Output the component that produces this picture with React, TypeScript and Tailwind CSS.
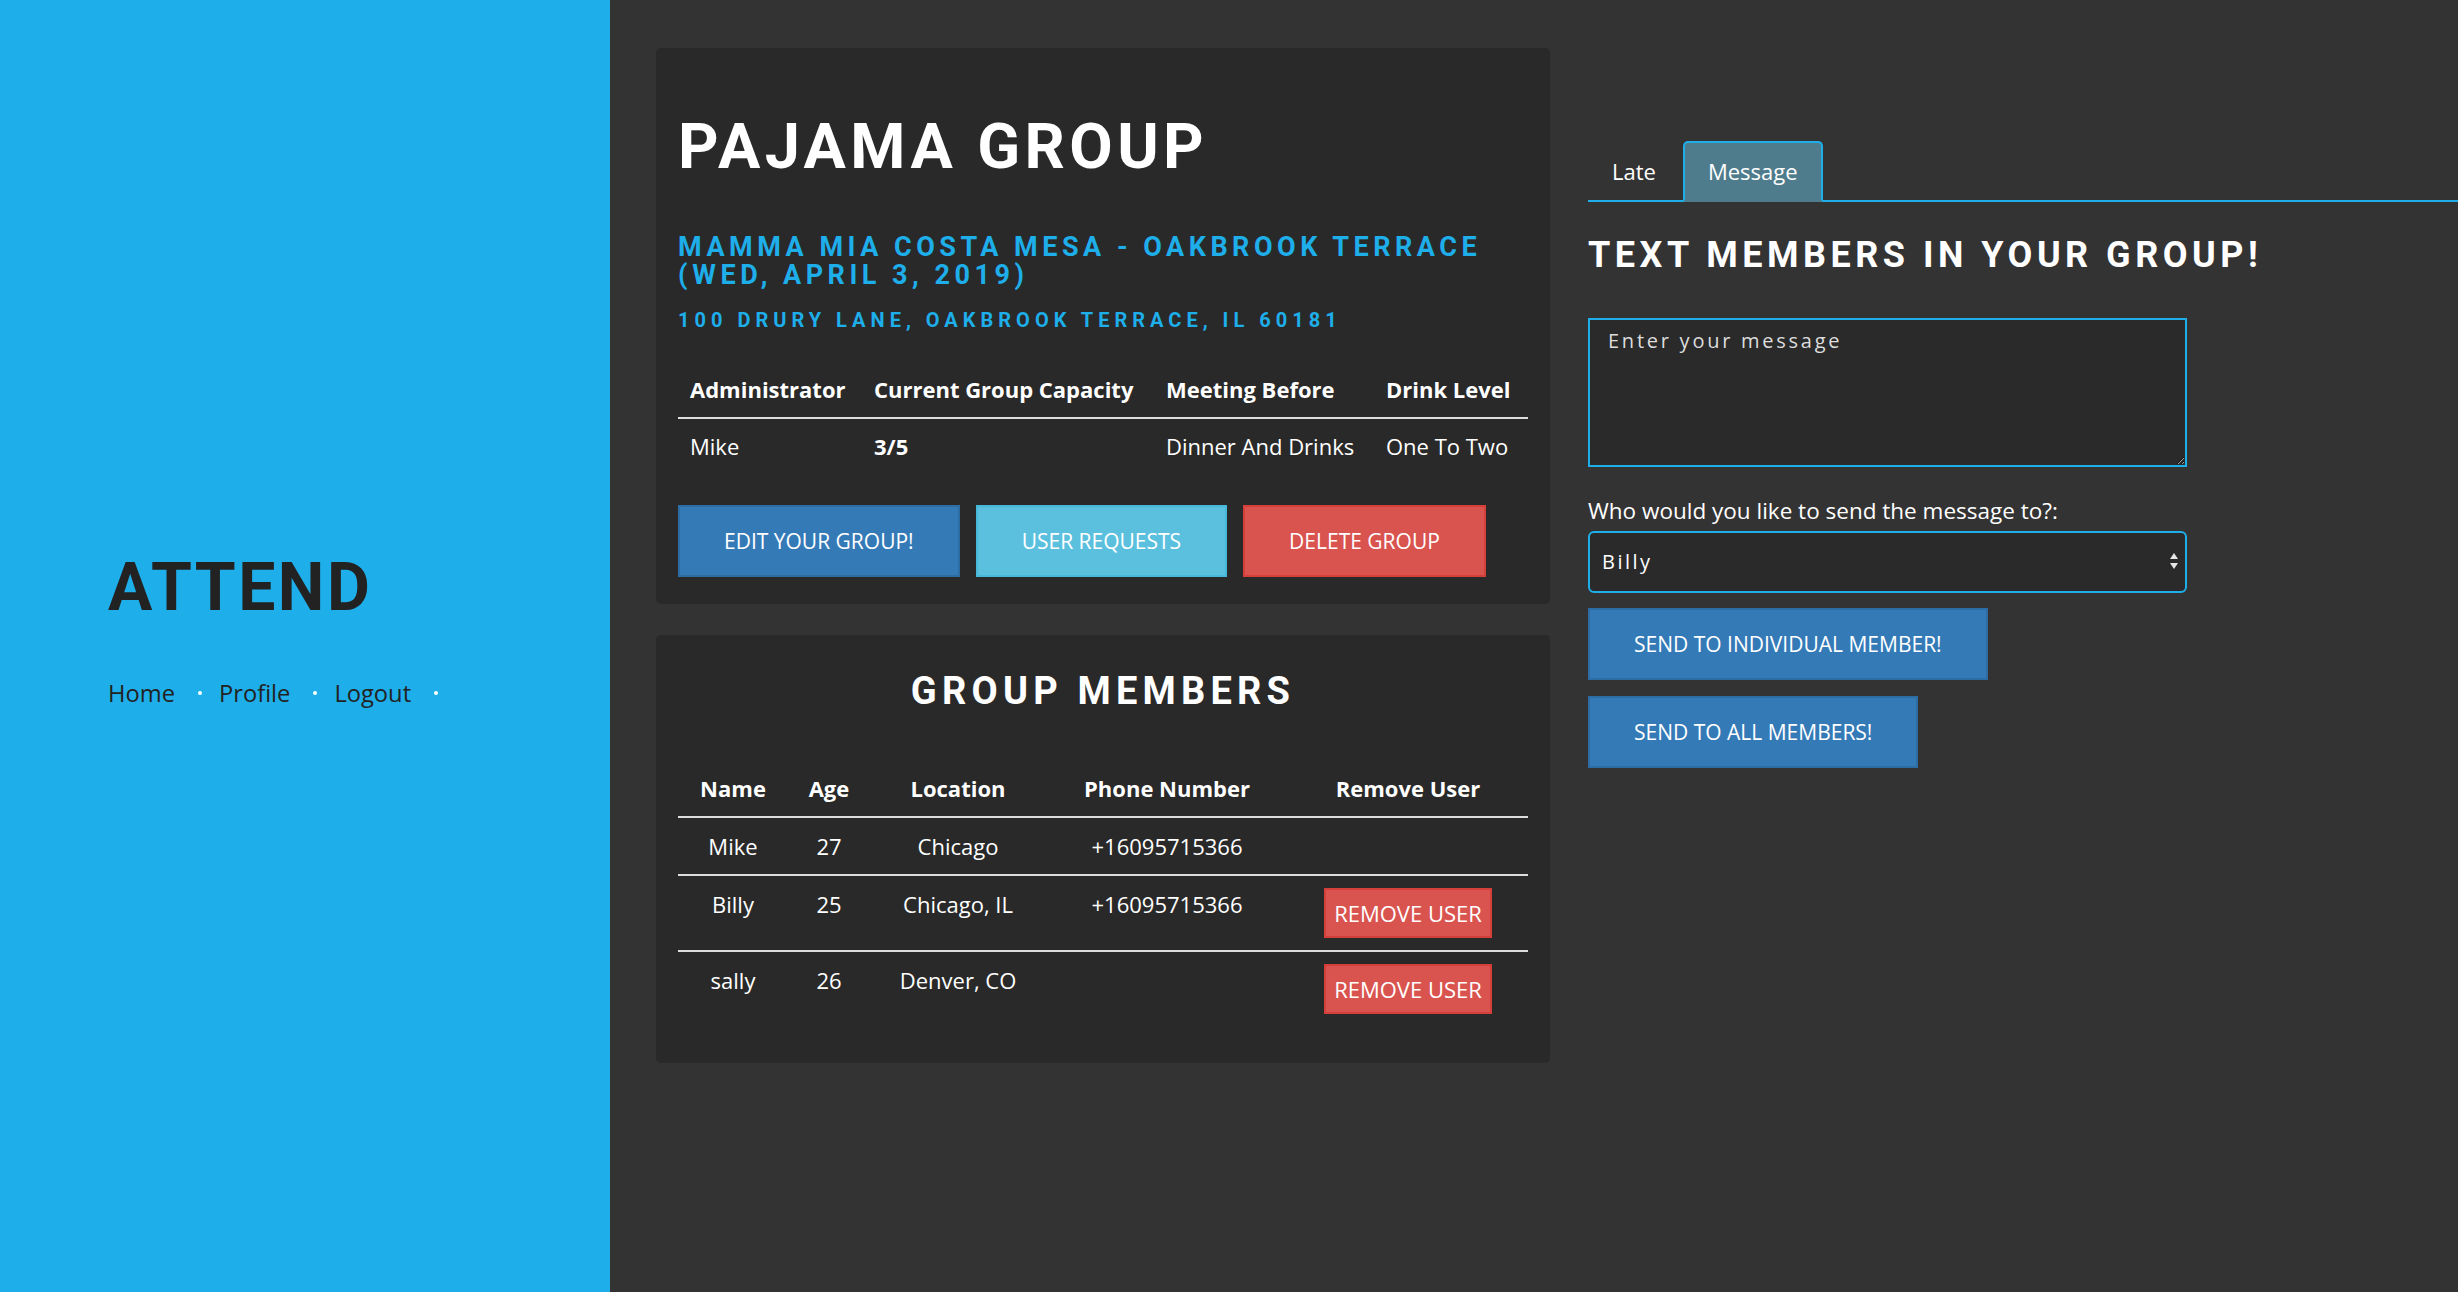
import type { ReactNode } from 'react'

const heading = "font-['Roboto',sans-serif] font-bold uppercase"

interface Member {
  name: string
  age: number
  location: string
  phone: string
  removable: boolean
}

const members: Member[] = [
  { name: 'Mike', age: 27, location: 'Chicago', phone: '+16095715366', removable: false },
  { name: 'Billy', age: 25, location: 'Chicago, IL', phone: '+16095715366', removable: true },
  { name: 'sally', age: 26, location: 'Denver, CO', phone: '', removable: true },
]

function Sidebar() {
  const links = ['Home', 'Profile', 'Logout']
  return (
    <aside className="w-[610px] shrink-0 bg-[#1eaeea] pt-[548px] pl-[108px]">
      <h1 className={`${heading} text-[66px] leading-[79px] tracking-[2.5px] text-[#222]`}>Attend</h1>
      <nav className="mt-[50px] flex items-center text-[23.7px] leading-[32px] text-[#222]">
        {links.map((l) => (
          <div key={l} className="flex items-center">
            <a href="#" className="text-[#222]">{l}</a>
            <span className="ml-[23px] mr-[17px] h-[4px] w-[4px] rounded-full bg-white" />
          </div>
        ))}
      </nav>
    </aside>
  )
}

function Btn({ color, children }: { color: string; children: ReactNode }) {
  return (
    <button className={`border-2 px-[44px] py-[18px] text-[21px] leading-[32px] text-white uppercase ${color}`}>
      {children}
    </button>
  )
}

function GroupCard() {
  return (
    <div className="w-[894px] rounded-[5px] bg-[#292929] px-[22px] pt-[61px] pb-[27px]">
      <h1 className={`${heading} text-[63px] leading-[76px] tracking-[4.4px] text-white`}>Pajama Group</h1>
      <h2 className={`${heading} mt-[48px] text-[27px] leading-[28px] tracking-[4.5px] text-[#1eaeea]`}>
        Mamma Mia Costa Mesa - Oakbrook Terrace
        <br />
        (Wed, April 3, 2019)
      </h2>
      <h3 className={`${heading} mt-[17px] text-[20px] leading-[28px] tracking-[5px] text-[#1eaeea]`}>
        100 Drury Lane, Oakbrook Terrace, IL 60181
      </h3>
      <table className="mt-[27px] w-[850px] table-fixed text-left text-[22px] leading-[32px] text-white">
        <colgroup>
          <col className="w-[184px]" />
          <col className="w-[292px]" />
          <col className="w-[220px]" />
          <col className="w-[154px]" />
        </colgroup>
        <thead>
          <tr className="border-b-2 border-[#ddd]">
            <th className="px-[12px] py-[12px] font-bold">Administrator</th>
            <th className="px-[12px] py-[12px] font-bold">Current Group Capacity</th>
            <th className="px-[12px] py-[12px] font-bold">Meeting Before</th>
            <th className="px-[12px] py-[12px] font-bold">Drink Level</th>
          </tr>
        </thead>
        <tbody>
          <tr>
            <td className="px-[12px] pt-[11px] pb-[13px]">Mike</td>
            <td className="px-[12px] pt-[11px] pb-[13px] font-bold">3/5</td>
            <td className="px-[12px] pt-[11px] pb-[13px]">Dinner And Drinks</td>
            <td className="px-[12px] pt-[11px] pb-[13px]">One To Two</td>
          </tr>
        </tbody>
      </table>
      <div className="mt-[30px] flex gap-[16px]">
        <Btn color="bg-[#337ab7] border-[#2e6da4]">Edit Your Group!</Btn>
        <Btn color="bg-[#5bc0de] border-[#46b8da]">User Requests</Btn>
        <Btn color="bg-[#d9534f] border-[#d43f3a]">Delete Group</Btn>
      </div>
    </div>
  )
}

function MembersCard() {
  const cell = 'px-[12px] py-[12px] align-top'
  return (
    <div className="mt-[31px] w-[894px] rounded-[5px] bg-[#292929] px-[22px] pt-[33px] pb-[37px]">
      <h2 className={`${heading} text-center text-[38px] leading-[46px] tracking-[5.2px] text-white`}>Group Members</h2>
      <table className="mt-[46px] w-[850px] table-fixed text-center text-[22px] leading-[32px] text-white">
        <colgroup>
          <col className="w-[110px]" />
          <col className="w-[82px]" />
          <col className="w-[176px]" />
          <col className="w-[242px]" />
          <col className="w-[240px]" />
        </colgroup>
        <thead>
          <tr className="border-b-2 border-[#ddd]">
            <th className={`${cell} font-bold`}>Name</th>
            <th className={`${cell} font-bold`}>Age</th>
            <th className={`${cell} font-bold`}>Location</th>
            <th className={`${cell} font-bold`}>Phone Number</th>
            <th className={`${cell} font-bold`}>Remove User</th>
          </tr>
        </thead>
        <tbody>
          {members.map((m, i) => (
            <tr key={m.name} className={i < members.length - 1 ? 'border-b-2 border-[#ddd]' : ''}>
              <td className={cell}>{m.name}</td>
              <td className={cell}>{m.age}</td>
              <td className={cell}>{m.location}</td>
              <td className={cell}>{m.phone}</td>
              <td className={cell}>
                {m.removable && (
                  <button className="border-2 border-[#d43f3a] bg-[#d9534f] px-[8px] py-[7px] text-[22px] leading-[32px] text-white uppercase">
                    Remove User
                  </button>
                )}
              </td>
            </tr>
          ))}
        </tbody>
      </table>
    </div>
  )
}

function MessagePanel() {
  return (
    <div className="ml-[38px] flex-1 pt-[93px]">
      <ul className="flex border-b-2 border-[#1eaeea] text-[22px] leading-[33px] text-white">
        <li className="-mb-[2px] mr-[3px]">
          <a href="#" className="block border-2 border-transparent px-[22px] py-[12px]">Late</a>
        </li>
        <li className="-mb-[2px]">
          <a href="#" className="block rounded-t-[5px] border-2 border-[#1eaeea] border-b-[#4e7c8c] bg-[#4e7c8c] px-[23px] py-[12px]">
            Message
          </a>
        </li>
      </ul>
      <h2 className={`${heading} mt-[31px] text-[36px] leading-[44px] tracking-[4.5px] text-white`}>Text Members In Your Group!</h2>
      <textarea
        placeholder="Enter your message"
        className="mt-[41px] block h-[149px] w-[599px] border-2 border-[#1eaeea] bg-[#2a2a2a] px-[18px] pt-[7px] text-[20px] leading-[28px] tracking-[2.75px] text-white outline-none placeholder:text-[#ddd]"
      />
      <label className="mt-[28px] block text-[22.5px] leading-[32px] text-white">Who would you like to send the message to?:</label>
      <div className="relative mt-[4px] w-[599px]">
        <select className="block h-[62px] w-full appearance-none rounded-[6px] border-2 border-[#1eaeea] bg-[#2a2a2a] pl-[12px] text-[20px] tracking-[2.5px] text-white outline-none">
          <option>Billy</option>
          <option>sally</option>
        </select>
        <svg className="pointer-events-none absolute top-[21px] right-[8px]" width="10" height="18" viewBox="0 0 10 18">
          <path d="M5 1 L9 7 L1 7 Z" fill="#e5e5e5" />
          <path d="M1 11 L9 11 L5 17 Z" fill="#e5e5e5" />
        </svg>
      </div>
      <div className="mt-[15px] flex flex-col items-start gap-[16px]">
        <Btn color="bg-[#337ab7] border-[#2e6da4]">Send To Individual Member!</Btn>
        <Btn color="bg-[#337ab7] border-[#2e6da4]">Send To All Members!</Btn>
      </div>
    </div>
  )
}

export default function App() {
  return (
    <div className="flex min-h-screen bg-[#333] font-['Open_Sans',sans-serif]">
      <Sidebar />
      <main className="flex flex-1 pt-[48px] pl-[46px]">
        <div>
          <GroupCard />
          <MembersCard />
        </div>
        <MessagePanel />
      </main>
    </div>
  )
}
